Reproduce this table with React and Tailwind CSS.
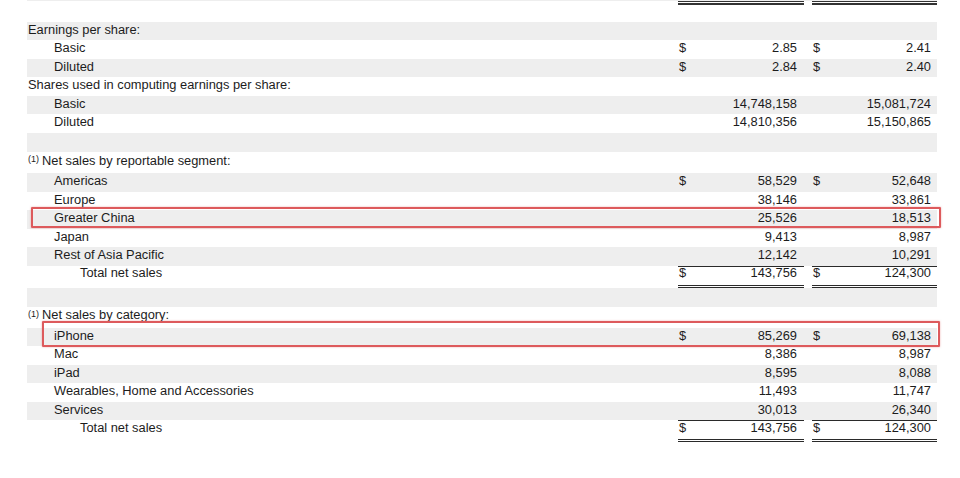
import React from 'react';

const GRAY = 'bg-[#eeeeee]';

function Cell({ dollar, value, total, last }) {
  return (
    <div
      className={`flex items-center justify-between h-full ${last ? 'w-[125px] pr-[6px]' : 'w-[126px] pr-[7px]'} pl-[1px] ${
        total ? 'border-t border-t-[#2a2a2a] border-b-[3px] border-double border-b-[#2a2a2a] pb-[4px]' : 'pb-[1px]'
      }`}
      style={total ? { borderTopStyle: 'solid' } : undefined}
    >
      <span>{dollar || ''}</span>
      <span>{value || ''}</span>
    </div>
  );
}

function Row({ label, indent = 0, gray, h = 18.5, c1, c2, total, sup }) {
  const pad = indent === 0 ? 'pl-[1px]' : indent === 1 ? 'pl-[27px]' : 'pl-[53px]';
  const lift = total ? 'pb-[6px]' : sup ? 'pb-[3px]' : 'pb-[1px]';
  return (
    <div className={`flex items-stretch ${gray ? GRAY : 'bg-white'}`} style={{ height: h }}>
      <div className={`w-[651px] flex items-center ${pad} ${lift}`}>
        {sup && <sup className="text-[9px] mr-[3px] relative top-[-2px]">(1)</sup>}
        <span>{label}</span>
      </div>
      {c1 || total ? <Cell dollar={c1?.[0]} value={c1?.[1]} total={total} /> : <div className="w-[126px]" />}
      <div className="w-[8px]" />
      {c2 || total ? <Cell dollar={c2?.[0]} value={c2?.[1]} total={total} last /> : <div className="w-[125px]" />}
    </div>
  );
}

export default function App() {
  return (
    <div
      className="relative w-[960px] h-[478px] bg-white text-[12.85px] text-[#1c1c1c] overflow-hidden"
      style={{ fontFamily: '"Liberation Sans", Arial, sans-serif' }}
    >
      <div className="ml-[27px] w-[910px] leading-none">
        {/* top rule */}
        <div className={`h-[1px] ${GRAY}`} />
        <div className="flex h-[4px]">
          <div className="w-[651px]" />
          <div className="w-[126px] border-t border-b-2 border-[#333]" />
          <div className="w-[8px]" />
          <div className="w-[125px] border-t border-b-2 border-[#333]" />
        </div>
        <div className="h-[16.5px]" />

        {/* Earnings per share */}
        <Row label="Earnings per share:" gray />
        <Row label="Basic" indent={1} c1={['$', '2.85']} c2={['$', '2.41']} />
        <Row label="Diluted" indent={1} gray c1={['$', '2.84']} c2={['$', '2.40']} />
        <Row label="Shares used in computing earnings per share:" />
        <Row label="Basic" indent={1} gray c1={['', '14,748,158']} c2={['', '15,081,724']} />
        <Row label="Diluted" indent={1} c1={['', '14,810,356']} c2={['', '15,150,865']} />
        <div className={`h-[19.5px] ${GRAY}`} />

        {/* Segment */}
        <Row label="Net sales by reportable segment:" sup h={21} />
        <Row label="Americas" indent={1} gray c1={['$', '58,529']} c2={['$', '52,648']} />
        <Row label="Europe" indent={1} c1={['', '38,146']} c2={['', '33,861']} />
        <Row label="Greater China" indent={1} gray c1={['', '25,526']} c2={['', '18,513']} />
        <Row label="Japan" indent={1} c1={['', '9,413']} c2={['', '8,987']} />
        <Row label="Rest of Asia Pacific" indent={1} gray c1={['', '12,142']} c2={['', '10,291']} />
        <Row label="Total net sales" indent={2} total h={22} c1={['$', '143,756']} c2={['$', '124,300']} />
        <div className={`h-[19.5px] ${GRAY}`} />

        {/* Category */}
        <Row label="Net sales by category:" sup h={20.5} />
        <Row label="iPhone" indent={1} gray c1={['$', '85,269']} c2={['$', '69,138']} />
        <Row label="Mac" indent={1} c1={['', '8,386']} c2={['', '8,987']} />
        <Row label="iPad" indent={1} gray c1={['', '8,595']} c2={['', '8,088']} />
        <Row label="Wearables, Home and Accessories" indent={1} c1={['', '11,493']} c2={['', '11,747']} />
        <Row label="Services" indent={1} gray c1={['', '30,013']} c2={['', '26,340']} />
        <Row label="Total net sales" indent={2} total h={22} c1={['$', '143,756']} c2={['$', '124,300']} />
      </div>

      {/* highlight boxes */}
      <div className="absolute left-[31px] top-[207px] w-[910px] h-[21px] border-2 border-[#dd5a5c] rounded-[1px] shadow-[0_0_2px_rgba(220,80,80,0.5)]" />
      <div className="absolute left-[42px] top-[321px] w-[898px] h-[26px] border-2 border-[#dd5a5c] rounded-[1px] shadow-[0_0_2px_rgba(220,80,80,0.5)]" />
    </div>
  );
}
